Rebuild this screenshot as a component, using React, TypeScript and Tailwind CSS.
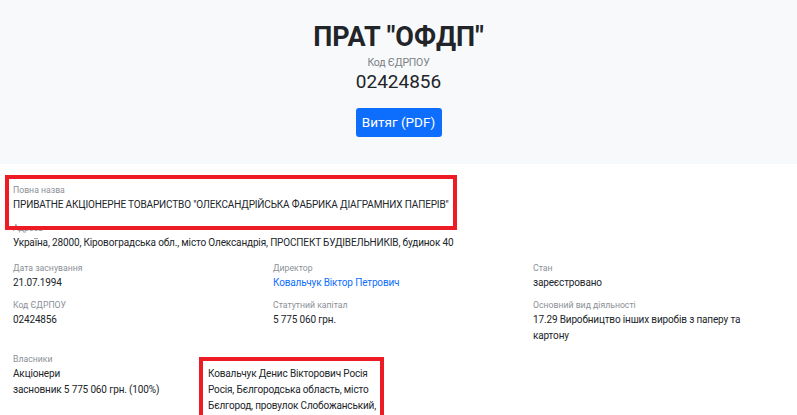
import React from 'react';

interface FieldProps {
  label: string;
  children: React.ReactNode;
  className?: string;
}

const Field: React.FC<FieldProps> = ({ label, children, className }) => {
  return (
    <div className={className}>
      <div className="text-[8.7px] leading-[14px] text-[#8b9096]">{label}</div>
      <div className="text-[10px] leading-[16px] tracking-[-0.15px] text-[#212529]">{children}</div>
    </div>
  );
};

export default function App() {
  return (
    <div className="min-h-[415px] w-[797px] bg-white font-['Roboto',sans-serif]">
      {/* Header */}
      <div className="flex flex-col items-center bg-[#f8f9fa] pt-[21px] pb-[27px]">
        <h1 className="text-[27px] font-bold leading-[32px] text-[#212529]">ПРАТ "ОФДП"</h1>
        <div className="mt-[3px] text-[10.5px] leading-[14px] tracking-[-0.2px] text-[#7a8085]">Код ЄДРПОУ</div>
        <div className="text-[19px] leading-[24px] text-[#212529]">02424856</div>
        <button className="mt-[14px] h-[29px] w-[86px] rounded-[3px] bg-[#0d6efd] text-[13.5px] text-white">
          Витяг (PDF)
        </button>
      </div>

      {/* Details */}
      <div className="pl-[13px] pt-[19px]">
        <div className="relative mb-[8px]">
          <Field label="Повна назва">
            ПРИВАТНЕ АКЦІОНЕРНЕ ТОВАРИСТВО "ОЛЕКСАНДРІЙСЬКА ФАБРИКА ДІАГРАМНИХ ПАПЕРІВ"
          </Field>
          <div className="absolute left-[-8px] top-[-8px] h-[55px] w-[452px] border-4 border-[#ed1c24]"></div>
        </div>

        <Field label="Адреса" className="mb-[10px]">
          Україна, 28000, Кіровоградська обл., місто Олександрія, ПРОСПЕКТ БУДІВЕЛЬНИКІВ, будинок 40
        </Field>

        <div className="grid grid-cols-[260px_260px_260px] gap-y-[7px]">
          <Field label="Дата заснування">21.07.1994</Field>
          <Field label="Директор">
            <span className="text-[#0d6efd]">Ковальчук Віктор Петрович</span>
          </Field>
          <Field label="Стан">зареєстровано</Field>
          <Field label="Код ЄДРПОУ">02424856</Field>
          <Field label="Статутний капітал">5 775 060 грн.</Field>
          <Field label="Основний вид діяльності">
            <div className="w-[225px]">17.29 Виробництво інших виробів з паперу та картону</div>
          </Field>
        </div>

        <div className="mt-[8px] flex">
          <div className="w-[195px]">
            <Field label="Власники">
              <div>Акціонери</div>
              <div>засновник 5 775 060 грн. (100%)</div>
            </Field>
          </div>
          <div className="relative mt-[14px] w-[173px] text-[10px] leading-[16px] tracking-[-0.15px] text-[#212529]">
            Ковальчук Денис Вікторович Росія Росія, Бєлгородська область, місто Бєлгород, провулок Слобожанський,
            <div className="absolute left-[-9px] right-[-3px] top-[-9px] bottom-[-9px] border-4 border-[#ed1c24]"></div>
          </div>
        </div>
      </div>
    </div>
  );
}
